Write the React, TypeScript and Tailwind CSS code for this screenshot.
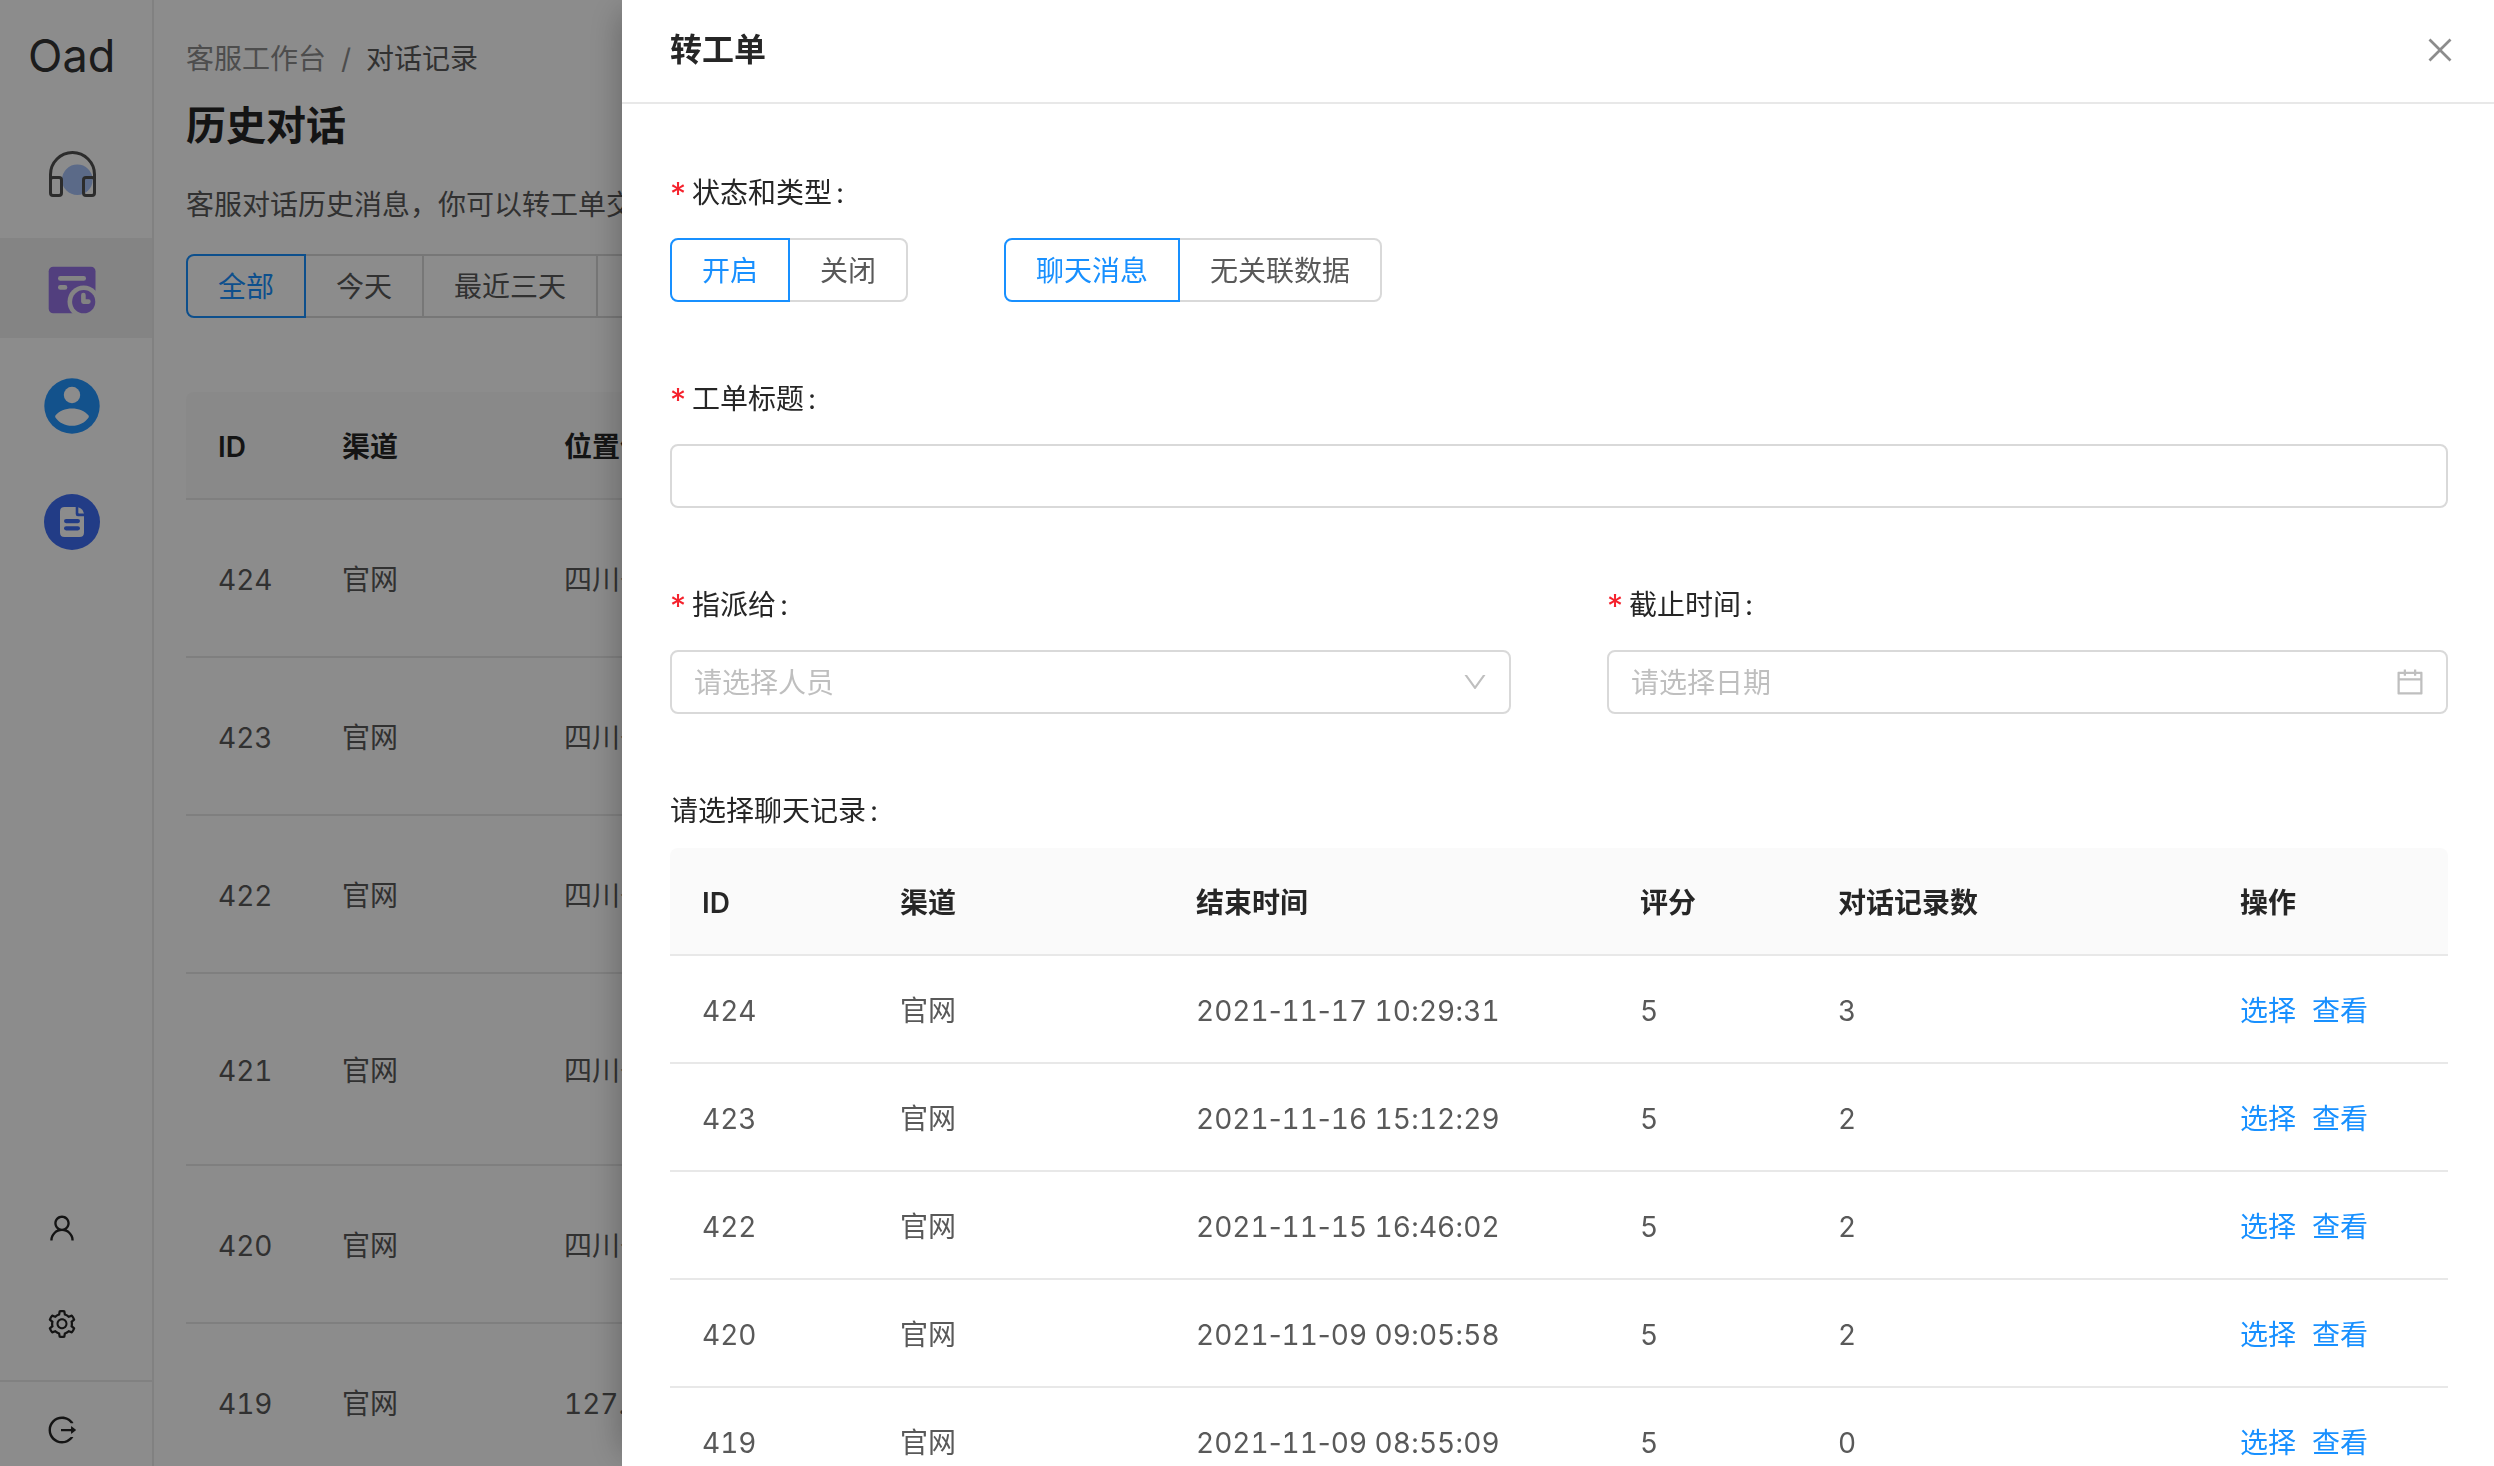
import { useState } from 'react'
import {
  AiOutlineCalendar,
  AiOutlineClose,
  AiOutlineDown,
  AiOutlineLogout,
  AiOutlineSetting,
  AiOutlineUser
} from 'react-icons/ai'

const RECORDS = [
  { id: 424, channel: '官网', location: '四川省', end: '2021-11-17 10:29:31', score: 5, count: 3 },
  { id: 423, channel: '官网', location: '四川省', end: '2021-11-16 15:12:29', score: 5, count: 2 },
  { id: 422, channel: '官网', location: '四川省', end: '2021-11-15 16:46:02', score: 5, count: 2 },
  { id: 421, channel: '官网', location: '四川省', tall: true },
  { id: 420, channel: '官网', location: '四川省', end: '2021-11-09 09:05:58', score: 5, count: 2 },
  { id: 419, channel: '官网', location: '127.0.0.1', end: '2021-11-09 08:55:09', score: 5, count: 0 }
]

function HeadsetIcon() {
  return (
    <svg viewBox="0 0 56 56" className="w-14 h-14" fill="none" stroke="#505050" strokeWidth="3">
      <circle cx="33.3" cy="33.7" r="15.3" fill="#a6c1f8" stroke="none" />
      <path d="M6.5 34V28.5a22 22 0 0 1 44 0V34" />
      <rect x="6.5" y="31.5" width="11" height="18" rx="2.5" />
      <rect x="39.5" y="31.5" width="11" height="18" rx="2.5" />
    </svg>
  )
}

function HistoryIcon() {
  return (
    <svg viewBox="0 0 56 56" className="w-14 h-14">
      <mask id="history-cut">
        <rect width="56" height="56" fill="white" />
        <rect x="14" y="14" width="28" height="4.7" rx="2.3" fill="black" />
        <rect x="14" y="23" width="9.3" height="4.8" rx="2.3" fill="black" />
        <circle cx="39.7" cy="39.7" r="16.2" fill="black" />
      </mask>
      <rect x="4.7" y="4.7" width="46.8" height="46.6" rx="4.5" fill="#9573e6" mask="url(#history-cut)" />
      <circle cx="39.7" cy="39.7" r="11.6" fill="#9573e6" />
      <path
        d="M39.4 33v6.6h5"
        fill="none"
        stroke="#ededed"
        strokeWidth="4.6"
        strokeLinecap="round"
        strokeLinejoin="round"
      />
    </svg>
  )
}

function CustomerIcon() {
  return (
    <svg viewBox="0 0 56 56" className="w-14 h-14">
      <circle cx="28" cy="28" r="27.7" fill="#2496ff" />
      <circle cx="28" cy="17" r="8.2" fill="white" />
      <path
        d="M11.4 37.6C15 32.4 21.5 30.4 28 30.4s13 2 16.6 7.2q.5.9 0 1.8C41 44.6 35 47.7 28 47.7s-13-3.1-16.6-8.3q-.5-.9 0-1.8z"
        fill="white"
      />
    </svg>
  )
}

function TicketIcon() {
  return (
    <svg viewBox="0 0 56 56" className="w-14 h-14">
      <circle cx="28" cy="28" r="28" fill="#3e6df5" />
      <path d="M20.5 13H31.7v7q0 2.2 2.2 2.2H40V38.5q0 4.5-4.5 4.5H20.5Q16 43 16 38.5v-21Q16 13 20.5 13z" fill="white" />
      <path d="M34.3 13.2q5 1.6 5.7 6.2h-5q-.7 0-.7-.7z" fill="white" />
      <rect x="20" y="25" width="16" height="4.2" rx="2.1" fill="#3e6df5" />
      <rect x="20" y="32.2" width="16" height="4.2" rx="2.1" fill="#3e6df5" />
    </svg>
  )
}

const MENU = [
  { label: '客服', icon: HeadsetIcon },
  { label: '历史对话', icon: HistoryIcon },
  { label: '客户', icon: CustomerIcon },
  { label: '工单', icon: TicketIcon }
]

function Sidebar() {
  return (
    <aside className="flex w-[154px] shrink-0 flex-col border-r-2 border-[#ebebeb]">
      <div className="pt-6 pl-7 text-[45px] leading-[64px] text-[#333]">Oad</div>
      <nav className="mt-[34px] flex flex-col gap-4">
        {MENU.map(({ label, icon: Icon }, i) => (
          <a
            key={label}
            href="#"
            aria-label={label}
            className={`flex h-[100px] items-center pt-1 pl-11 ${i === 1 ? 'bg-[#f0f0f0]' : ''}`}
          >
            <Icon />
          </a>
        ))}
      </nav>
      <div className="mt-auto flex flex-col gap-16 pb-10 pl-[46px] text-[32px] text-[#262626]">
        <button aria-label="账户" className="w-8">
          <AiOutlineUser />
        </button>
        <button aria-label="设置" className="w-8">
          <AiOutlineSetting />
        </button>
      </div>
      <div className="flex h-[86px] items-center border-t-2 border-[#ebebeb] pt-4 pb-1 pl-[46px] text-[32px] text-[#262626]">
        <button aria-label="退出" className="w-8">
          <AiOutlineLogout />
        </button>
      </div>
    </aside>
  )
}

function RadioGroup({ name, options }: { name: string; options: string[] }) {
  const [value, setValue] = useState(options[0])

  return (
    <div role="radiogroup" aria-label={name} className="flex">
      {options.map((option) => (
        <label
          key={option}
          className={`relative -ml-0.5 flex h-16 shrink-0 cursor-pointer items-center border-2 px-[30px] pt-0.5 first:ml-0 first:rounded-l-lg last:rounded-r-lg ${
            option === value ? 'z-10 border-[#1890ff] text-[#1890ff]' : 'border-[#d9d9d9] text-[#595959]'
          }`}
        >
          <input
            type="radio"
            name={name}
            checked={option === value}
            onChange={() => setValue(option)}
            className="sr-only"
          />
          {option}
        </label>
      ))}
    </div>
  )
}

function Label({ text, htmlFor, required = true }: { text: string; htmlFor?: string; required?: boolean }) {
  return (
    <label htmlFor={htmlFor} className="flex h-11 text-[#262626]">
      {required && <span className="w-[22px] text-[32px] leading-[48px] text-[#f5222d]">*</span>}
      {text}
      <span className="ml-1">:</span>
    </label>
  )
}

// tabular figures would also widen the hyphens and colons, so only the digits get them
function DateTime({ value }: { value?: string }) {
  return (
    <time className="whitespace-nowrap">
      {value?.split(/([-:])/).map((part, i) => (
        <span key={i} className={i % 2 ? 'normal-nums' : undefined}>
          {part}
        </span>
      ))}
    </time>
  )
}

function History() {
  return (
    <main className="min-w-0 flex-1 overflow-hidden pt-[37px] pl-8 whitespace-nowrap">
      <div className="flex gap-[15px] text-[#8c8c8c]">
        <a href="#">客服工作台</a>
        <span>/</span>
        <span className="text-[#595959]">对话记录</span>
      </div>
      <h1 className="mt-[15px] text-[40px] leading-[60px] font-semibold text-[#262626]">历史对话</h1>
      <p className="my-[27px] text-[#595959]">客服对话历史消息，你可以转工单交接</p>
      <RadioGroup name="时间" options={['全部', '今天', '最近三天', '本周']} />
      <table className="mt-[74px] w-full table-fixed border-separate border-spacing-0 text-left tabular-nums">
        <colgroup>
          <col className="w-[124px]" />
          <col className="w-[222px]" />
          <col />
        </colgroup>
        <thead className="text-[#262626]">
          <tr className="h-[108px]">
            {['ID', '渠道', '位置信息'].map((title) => (
              <th
                key={title}
                className="border-b-2 border-[#e8e8e8] bg-[#fafafa] px-8 pt-1 font-semibold first:rounded-tl-lg"
              >
                {title}
              </th>
            ))}
          </tr>
        </thead>
        <tbody className="text-[#595959]">
          {RECORDS.map((r) => (
            <tr key={r.id} className={r.tall ? 'h-[192px]' : 'h-[158px]'}>
              <td className="border-b-2 border-[#e8e8e8] px-8 pt-1">{r.id}</td>
              <td className="border-b-2 border-[#e8e8e8] px-8 pt-1">{r.channel}</td>
              <td className="border-b-2 border-[#e8e8e8] px-8 pt-1">{r.location}</td>
            </tr>
          ))}
        </tbody>
      </table>
    </main>
  )
}

function RecordTable() {
  return (
    <table className="mt-[15px] w-full table-fixed border-separate border-spacing-0 text-left tabular-nums">
      <colgroup>
        <col className="w-[198px]" />
        <col className="w-[296px]" />
        <col className="w-[444px]" />
        <col className="w-[198px]" />
        <col className="w-[402px]" />
        <col />
      </colgroup>
      <thead className="text-[#262626]">
        <tr className="h-[108px]">
          {['ID', '渠道', '结束时间', '评分', '对话记录数', '操作'].map((title) => (
            <th
              key={title}
              className="border-b-2 border-[#e8e8e8] bg-[#fafafa] px-8 pt-1 font-semibold first:rounded-tl-lg last:rounded-tr-lg"
            >
              {title}
            </th>
          ))}
        </tr>
      </thead>
      <tbody className="text-[#595959]">
        {RECORDS.filter((r) => r.end).map((r) => (
          <tr key={r.id} className="h-[108px]">
            <td className="border-b-2 border-[#e8e8e8] px-8 pt-1">{r.id}</td>
            <td className="border-b-2 border-[#e8e8e8] px-8 pt-1">{r.channel}</td>
            <td className="border-b-2 border-[#e8e8e8] px-8 pt-1">
              <DateTime value={r.end} />
            </td>
            <td className="border-b-2 border-[#e8e8e8] px-8 pt-1">{r.score}</td>
            <td className="border-b-2 border-[#e8e8e8] px-8 pt-1">{r.count}</td>
            <td className="border-b-2 border-[#e8e8e8] px-8 pt-1">
              <div className="flex gap-4 text-[#1890ff]">
                <a href="#">选择</a>
                <a href="#">查看</a>
              </div>
            </td>
          </tr>
        ))}
      </tbody>
    </table>
  )
}

function TicketDrawer() {
  return (
    <section
      role="dialog"
      aria-label="转工单"
      className="fixed inset-y-0 right-0 left-[622px] z-30 overflow-hidden bg-white shadow-[-12px_0_32px_-12px_rgba(0,0,0,0.3)]"
    >
      <header className="flex items-center justify-between border-b-2 border-[#e8e8e8] pt-7 pr-[37px] pb-[30px] pl-12">
        <h2 className="text-[32px] leading-[44px] font-semibold text-[#262626]">转工单</h2>
        <button aria-label="关闭" className="text-[34px] text-[#8c8c8c]">
          <AiOutlineClose />
        </button>
      </header>

      <form className="pt-[67px] pr-[46px] pl-12">
        <Label text="状态和类型" />
        <div className="mt-[23px] flex gap-24">
          <RadioGroup name="状态" options={['开启', '关闭']} />
          <RadioGroup name="类型" options={['聊天消息', '无关联数据']} />
        </div>

        <div className="mt-[75px]">
          <Label text="工单标题" htmlFor="title" />
          <input
            id="title"
            type="text"
            className="mt-[23px] block h-16 w-full rounded-lg border-2 border-[#d9d9d9] px-[22px]"
          />
        </div>

        <div className="mt-[75px] grid grid-cols-2 gap-24">
          <div>
            <Label text="指派给" htmlFor="assignee" />
            <div className="relative mt-[23px]">
              <select
                id="assignee"
                className="block h-16 w-full appearance-none rounded-lg border-2 border-[#d9d9d9] bg-white px-[22px] pt-0.5 text-[#bfbfbf]"
              >
                <option>请选择人员</option>
              </select>
              <AiOutlineDown className="pointer-events-none absolute top-[18px] right-[22px] text-[28px] text-[#bfbfbf]" />
            </div>
          </div>
          <div>
            <Label text="截止时间" htmlFor="deadline" />
            <div className="mt-[23px] flex h-16 items-center rounded-lg border-2 border-[#d9d9d9] px-5">
              <input
                id="deadline"
                type="text"
                placeholder="请选择日期"
                className="min-w-0 flex-1 pt-0.5 pl-0.5 outline-none placeholder:text-[#bfbfbf]"
              />
              <AiOutlineCalendar className="text-[32px] text-[#bfbfbf]" />
            </div>
          </div>
        </div>

        <div className="mt-[75px]">
          <Label text="请选择聊天记录" required={false} />
          <RecordTable />
        </div>
      </form>
    </section>
  )
}

export default function App() {
  return (
    <div className="flex h-screen overflow-hidden bg-white font-[Inter,'Noto_Sans_CJK_SC',sans-serif] text-[28px] leading-[44px]">
      <Sidebar />
      <History />
      <div className="fixed inset-0 z-20 bg-black/45" />
      <TicketDrawer />
    </div>
  )
}
